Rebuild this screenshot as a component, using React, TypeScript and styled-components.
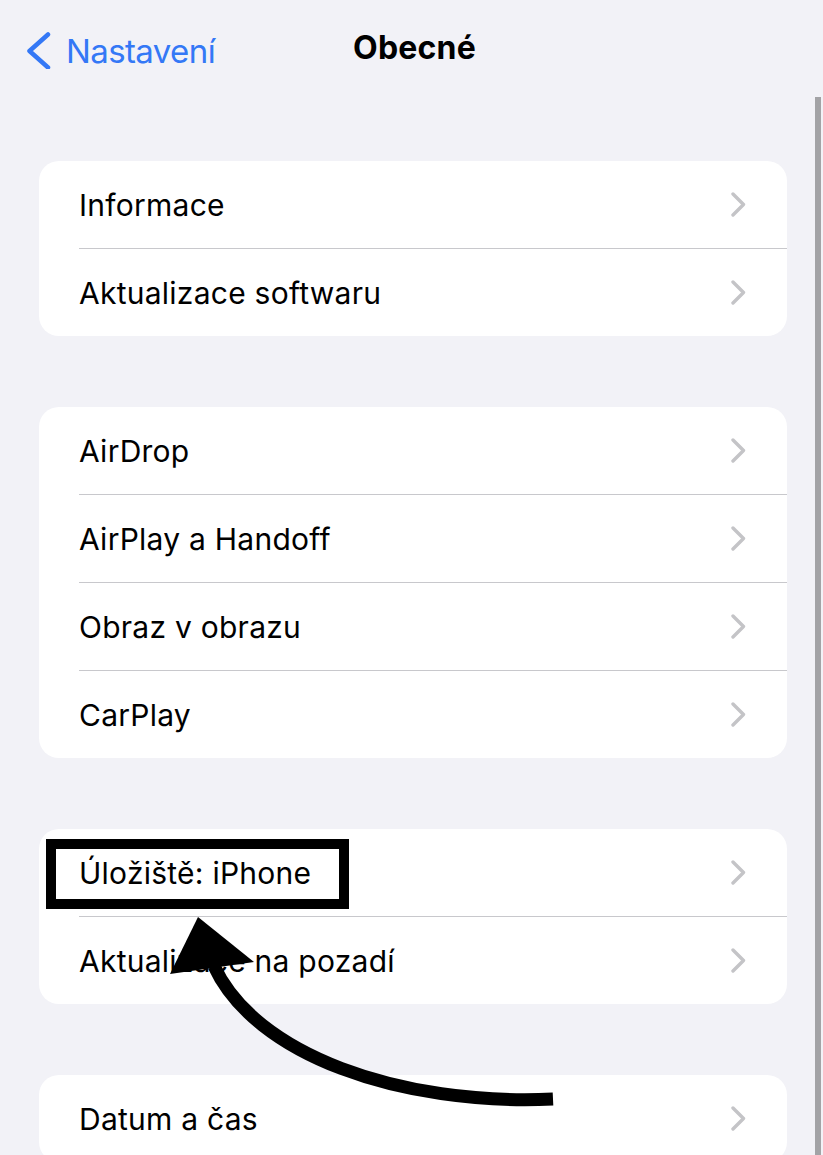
import React from 'react';
import styled, {createGlobalStyle} from 'styled-components';

const GlobalStyle = createGlobalStyle`
	html, body {
		margin: 0;
		padding: 0;
		background: #f2f2f7;
	}

	body {
		font-family: Inter, "Noto Sans", sans-serif;
		-webkit-font-smoothing: antialiased;
	}
`;

const Screen = styled.div`
	position: relative;
	width: 823px;
	height: 1155px;
	overflow: hidden;
	background: #f2f2f7;
`;

const NavBar = styled.header`
	display: grid;
	grid-template-columns: 1fr auto 1fr;
	align-items: center;
	height: 97px;
	padding: 0 27px;
	box-sizing: border-box;
`;

const BackLink = styled.a`
	display: flex;
	align-items: center;
	gap: 15px;
	color: #3478f6;
	font-size: 33px;
	letter-spacing: -0.6px;
	text-decoration: none;
	justify-self: start;
	padding-top: 4px;
`;

const Title = styled.h1`
	margin: 0 0 3px 6px;
	font-size: 32px;
	font-weight: 700;
	letter-spacing: 0.2px;
	color: #000;
`;

const ScrollBar = styled.div`
	position: absolute;
	top: 97px;
	right: 2px;
	width: 6px;
	height: 1100px;
	background: #a3a3a6;
`;

const List = styled.main`
	display: flex;
	flex-direction: column;
	gap: 71px;
	padding: 64px 36px 0 39px;
`;

const Card = styled.section`
	background: #fff;
	border-radius: 20px;
	overflow: hidden;
`;

const Row = styled.div<{$first?: boolean}>`
	position: relative;
	display: flex;
	align-items: center;
	justify-content: space-between;
	height: 87px;
	padding: 0 41px 0 40px;
	border-top: ${p => (p.$first ? 'none' : '1px solid transparent')};
	font-size: 30px;
	letter-spacing: 0.25px;
	color: #000;

	&::before {
		content: ${p => (p.$first ? 'none' : '""')};
		position: absolute;
		top: -1px;
		left: 40px;
		right: 0;
		height: 1px;
		background: #c8c8cc;
	}
`;

const Highlight = styled.div`
	position: absolute;
	left: 7px;
	top: 10px;
	width: 303px;
	height: 70px;
	box-sizing: border-box;
	border: 10px solid #000;
`;

const Annotation = styled.svg`
	position: absolute;
	top: 0;
	left: 0;
	pointer-events: none;
`;

const BackIcon = () => (
	<svg width="24" height="37" viewBox="0 0 24 37">
		<path d="M21 2.5 L2.5 19 L21 35.5" fill="none" stroke="#3478f6" strokeWidth="4.5" strokeLinecap="round" strokeLinejoin="round"/>
	</svg>
);

const Chevron = () => (
	<svg width="15" height="25" viewBox="0 0 15 25">
		<path d="M2 2 L12.5 12.5 L2 23" fill="none" stroke="#c4c4c7" strokeWidth="3.4" strokeLinecap="round" strokeLinejoin="round"/>
	</svg>
);

const groups: string[][] = [
	['Informace', 'Aktualizace softwaru'],
	['AirDrop', 'AirPlay a Handoff', 'Obraz v obrazu', 'CarPlay'],
	['Úložiště: iPhone', 'Aktualizace na pozadí'],
	['Datum a čas']
];

const App = () => (
	<>
		<GlobalStyle/>
		<Screen>
			<NavBar>
				<BackLink href="#">
					<BackIcon/>
					Nastavení
				</BackLink>
				<Title>Obecné</Title>
				<span/>
			</NavBar>
			<ScrollBar/>
			<List>
				{groups.map(items => (
					<Card key={items[0]}>
						{items.map((label, i) => (
							<Row key={label} $first={i === 0}>
								<span>{label}</span>
								<Chevron/>
								{label === 'Úložiště: iPhone' && <Highlight/>}
							</Row>
						))}
					</Card>
				))}
			</List>
			<Annotation width="823" height="1155" viewBox="0 0 823 1155">
				<path d="M553 1099 C400 1106, 255 1055, 214 966" fill="none" stroke="#000" strokeWidth="13"/>
				<polygon points="198,917 170,974 254,962" fill="#000"/>
			</Annotation>
		</Screen>
	</>
);

export default App;
